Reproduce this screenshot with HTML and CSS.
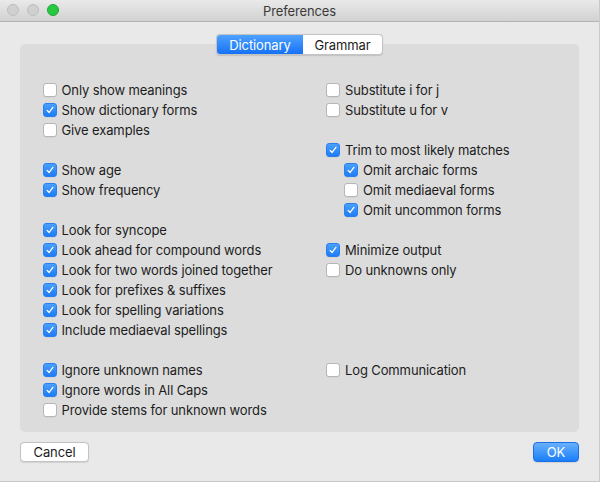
FILE: index.html
```html
<!DOCTYPE html>
<html>
<head>
<meta charset="utf-8">
<link rel="stylesheet" href="styles.css">
</head>
<body>
<div class="window">
  <div class="titlebar">
    <div class="lights">
      <span class="light gray"></span>
      <span class="light gray"></span>
      <span class="light green"></span>
    </div>
    <div class="title">Preferences</div>
  </div>
  <div class="content">
    <div class="tabs">
      <span class="tab selected">Dictionary</span>
      <span class="tab">Grammar</span>
    </div>
    <div class="panel">
      <div class="col left">
        <div class="group">
          <label class="row"><span class="cb"></span>Only show meanings</label>
          <label class="row"><span class="cb on"><svg viewBox="0 0 14 14"><path d="M3.6 7.4 L6 9.9 L10.4 3.9"/></svg></span>Show dictionary forms</label>
          <label class="row"><span class="cb"></span>Give examples</label>
        </div>
        <div class="group">
          <label class="row"><span class="cb on"><svg viewBox="0 0 14 14"><path d="M3.6 7.4 L6 9.9 L10.4 3.9"/></svg></span>Show age</label>
          <label class="row"><span class="cb on"><svg viewBox="0 0 14 14"><path d="M3.6 7.4 L6 9.9 L10.4 3.9"/></svg></span>Show frequency</label>
        </div>
        <div class="group">
          <label class="row"><span class="cb on"><svg viewBox="0 0 14 14"><path d="M3.6 7.4 L6 9.9 L10.4 3.9"/></svg></span>Look for syncope</label>
          <label class="row"><span class="cb on"><svg viewBox="0 0 14 14"><path d="M3.6 7.4 L6 9.9 L10.4 3.9"/></svg></span>Look ahead for compound words</label>
          <label class="row"><span class="cb on"><svg viewBox="0 0 14 14"><path d="M3.6 7.4 L6 9.9 L10.4 3.9"/></svg></span>Look for two words joined together</label>
          <label class="row"><span class="cb on"><svg viewBox="0 0 14 14"><path d="M3.6 7.4 L6 9.9 L10.4 3.9"/></svg></span>Look for prefixes &amp; suffixes</label>
          <label class="row"><span class="cb on"><svg viewBox="0 0 14 14"><path d="M3.6 7.4 L6 9.9 L10.4 3.9"/></svg></span>Look for spelling variations</label>
          <label class="row"><span class="cb on"><svg viewBox="0 0 14 14"><path d="M3.6 7.4 L6 9.9 L10.4 3.9"/></svg></span>Include mediaeval spellings</label>
        </div>
        <div class="group">
          <label class="row"><span class="cb on"><svg viewBox="0 0 14 14"><path d="M3.6 7.4 L6 9.9 L10.4 3.9"/></svg></span>Ignore unknown names</label>
          <label class="row"><span class="cb on"><svg viewBox="0 0 14 14"><path d="M3.6 7.4 L6 9.9 L10.4 3.9"/></svg></span>Ignore words in All Caps</label>
          <label class="row"><span class="cb"></span>Provide stems for unknown words</label>
        </div>
      </div>
      <div class="col right">
        <div class="group">
          <label class="row"><span class="cb"></span>Substitute i for j</label>
          <label class="row"><span class="cb"></span>Substitute u for v</label>
        </div>
        <div class="group">
          <label class="row"><span class="cb on"><svg viewBox="0 0 14 14"><path d="M3.6 7.4 L6 9.9 L10.4 3.9"/></svg></span>Trim to most likely matches</label>
          <label class="row sub"><span class="cb on"><svg viewBox="0 0 14 14"><path d="M3.6 7.4 L6 9.9 L10.4 3.9"/></svg></span>Omit archaic forms</label>
          <label class="row sub"><span class="cb"></span>Omit mediaeval forms</label>
          <label class="row sub"><span class="cb on"><svg viewBox="0 0 14 14"><path d="M3.6 7.4 L6 9.9 L10.4 3.9"/></svg></span>Omit uncommon forms</label>
        </div>
        <div class="group">
          <label class="row"><span class="cb on"><svg viewBox="0 0 14 14"><path d="M3.6 7.4 L6 9.9 L10.4 3.9"/></svg></span>Minimize output</label>
          <label class="row"><span class="cb"></span>Do unknowns only</label>
        </div>
        <div class="group far">
          <label class="row"><span class="cb"></span>Log Communication</label>
        </div>
      </div>
    </div>
    <div class="buttons">
      <span class="btn">Cancel</span>
      <span class="btn primary">OK</span>
    </div>
  </div>
</div>
</body>
</html>
```

FILE: styles.css
```css
html, body {
  margin: 0;
  padding: 0;
}
body {
  width: 600px;
  height: 482px;
  overflow: hidden;
  font-family: "Inter", "Liberation Sans", sans-serif;
  font-size: 13px;
  letter-spacing: -0.12px;
  color: #1c1c1c;
  background: #e9e9e9;
}
.window {
  width: 600px;
  height: 482px;
  box-sizing: border-box;
  border-right: 1px solid #c9c9c9;
  border-bottom: 1px solid #c9c9c9;
  background: #e9e9e9;
}
.titlebar {
  height: 21px;
  border-bottom: 1px solid #b3b3b3;
  background: linear-gradient(#e9e9e9, #d2d2d2);
  display: flex;
  align-items: center;
  justify-content: center;
  position: relative;
}
.lights {
  position: absolute;
  left: 7px;
  top: 4px;
  display: flex;
  gap: 8px;
}
.light {
  width: 12px;
  height: 12px;
  border-radius: 50%;
  box-sizing: border-box;
}
.light.gray {
  background: #d0d0d0;
  border: 1px solid #bdbdbd;
}
.light.green {
  background: #28c840;
  border: 1px solid #1fa832;
}
.title {
  color: #3a3a3a;
  font-size: 13px;
}
.content {
  padding: 12px 20px 0 20px;
}
.tabs {
  position: relative;
  z-index: 1;
  display: flex;
  width: 167px;
  height: 21px;
  margin: 0 auto;
  box-sizing: border-box;
  border: 1px solid #c4c4c4;
  border-radius: 4px;
  background: #fff;
  overflow: hidden;
  box-shadow: 0 0.5px 1px rgba(0,0,0,0.12);
}
.tab {
  display: flex;
  align-items: center;
  justify-content: center;
  height: 100%;
  color: #1c1c1c;
}
.tab.selected {
  width: 86px;
  color: #fff;
  background: linear-gradient(#4ea2fd, #1672f6);
}
.tab + .tab {
  flex: 1;
}
.panel {
  margin-top: -11px;
  height: 388px;
  width: 559px;
  box-sizing: border-box;
  background: #dcdcdc;
  border-radius: 5px;
  padding: 35.5px 0 0 22.5px;
  display: grid;
  grid-template-columns: 283.5px 1fr;
}
.col {
  display: flex;
  flex-direction: column;
}
.group {
  display: flex;
  flex-direction: column;
  margin-bottom: 20px;
}
.group.far {
  margin-top: 60px;
}
.row {
  display: flex;
  align-items: center;
  height: 20px;
  gap: 5px;
  white-space: nowrap;
}
.row.sub {
  padding-left: 18px;
}
.cb {
  width: 14px;
  height: 14px;
  box-sizing: border-box;
  flex: none;
  border-radius: 3px;
  background: #fff;
  border: 1px solid #b6b6b6;
  box-shadow: 0 0.5px 0.5px rgba(0,0,0,0.08);
  display: flex;
}
.cb.on {
  border: 1px solid #2a7ff0;
  background: linear-gradient(#4aa0fc, #1f7cf4);
}
.cb svg {
  width: 12px;
  height: 12px;
}
.cb svg path {
  fill: none;
  stroke: #fff;
  stroke-width: 1.5;
  stroke-linecap: round;
  stroke-linejoin: round;
}
.buttons {
  display: flex;
  justify-content: space-between;
  margin-top: 10px;
  width: 559px;
}
.btn {
  height: 20px;
  box-sizing: border-box;
  display: flex;
  align-items: center;
  justify-content: center;
  border-radius: 4px;
  background: #fff;
  border: 1px solid #c3c3c3;
  box-shadow: 0 0.5px 1px rgba(0,0,0,0.1);
  width: 69px;
  color: #1c1c1c;
}
.btn.primary {
  width: 46px;
  color: #fff;
  border-color: #1d6fe6;
  background: linear-gradient(#68b1fb, #1a7ef9);
}
```
